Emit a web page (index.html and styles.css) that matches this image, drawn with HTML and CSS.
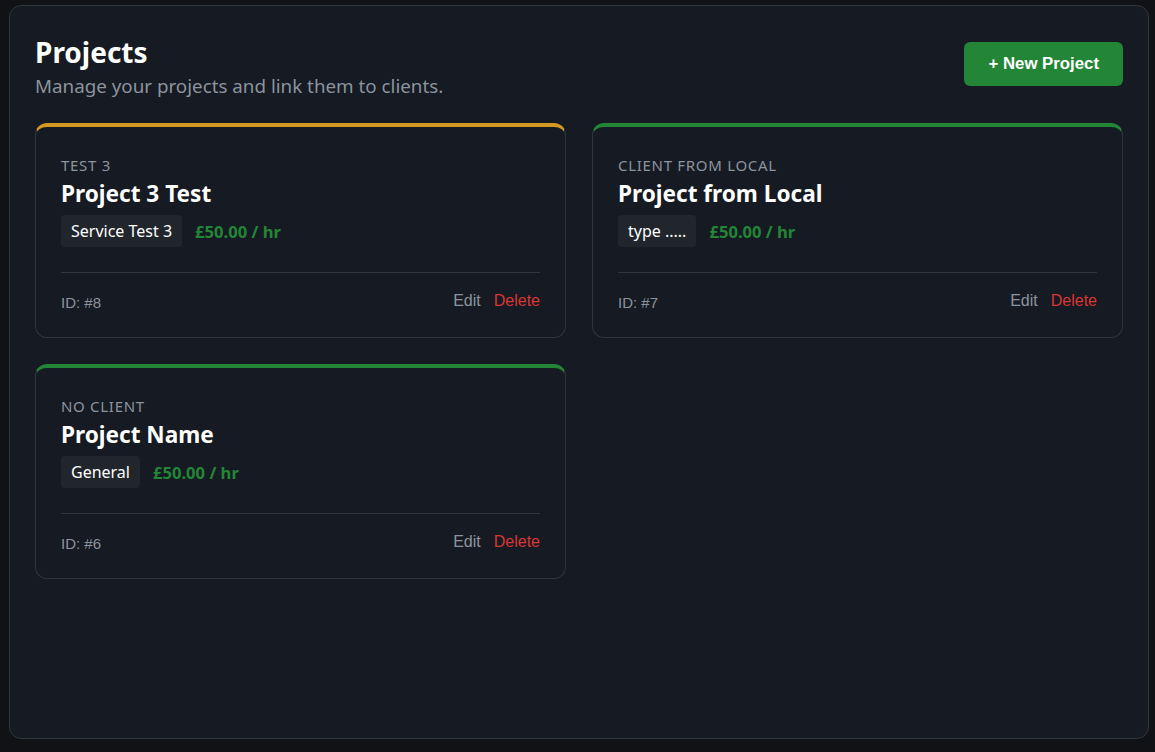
FILE: index.html
```html
<!DOCTYPE html>
<html lang="en">
<head>
    <meta charset="UTF-8">
    <meta name="viewport" content="width=device-width, initial-scale=1.0">
    <title>Projects</title>
    <link rel="stylesheet" href="styles.css">
</head>
<body>
    <div class="panel">
        <div class="header">
            <div>
                <h1 class="title">Projects</h1>
                <p class="subtitle">Manage your projects and link them to clients.</p>
            </div>
            <button class="btn-new">+ New Project</button>
        </div>

        <div class="grid">
            <div class="card card-amber">
                <div class="client">Test 3</div>
                <div class="name">Project 3 Test</div>
                <div class="meta">
                    <span class="tag">Service Test 3</span>
                    <span class="rate">£50.00 / hr</span>
                </div>
                <div class="footer">
                    <span class="id">ID: #8</span>
                    <div class="actions">
                        <button class="edit">Edit</button>
                        <button class="delete">Delete</button>
                    </div>
                </div>
            </div>

            <div class="card card-green">
                <div class="client">Client from Local</div>
                <div class="name">Project from Local</div>
                <div class="meta">
                    <span class="tag">type .....</span>
                    <span class="rate">£50.00 / hr</span>
                </div>
                <div class="footer">
                    <span class="id">ID: #7</span>
                    <div class="actions">
                        <button class="edit">Edit</button>
                        <button class="delete">Delete</button>
                    </div>
                </div>
            </div>

            <div class="card card-green">
                <div class="client">No client</div>
                <div class="name">Project Name</div>
                <div class="meta">
                    <span class="tag">General</span>
                    <span class="rate">£50.00 / hr</span>
                </div>
                <div class="footer">
                    <span class="id">ID: #6</span>
                    <div class="actions">
                        <button class="edit">Edit</button>
                        <button class="delete">Delete</button>
                    </div>
                </div>
            </div>
        </div>
    </div>
</body>
</html>
```

FILE: styles.css
```css
body {
    margin: 0;
    padding: 5px 6px 0 9px;
    background-color: #111215;
    font-family: "Noto Sans", "Open Sans", sans-serif;
    color: #e6edf3;
}

.panel {
    box-sizing: border-box;
    height: 734px;
    padding: 27px 25px 25px 25px;
    background-color: #161a22;
    border: 1px solid #30363d;
    border-radius: 12px;
}

.header {
    display: flex;
    justify-content: space-between;
    align-items: flex-start;
    margin-bottom: 24px;
}

.title {
    margin: 0;
    font-size: 28px;
    line-height: 38px;
    font-weight: 700;
    color: #ffffff;
}

.subtitle {
    margin: 2px 0 0 0;
    font-size: 18.8px;
    line-height: 26px;
    color: #8b949e;
}

.btn-new {
    margin-top: 9px;
    height: 44px;
    padding: 0 24px;
    border: none;
    border-radius: 6px;
    background-color: #238636;
    color: #ffffff;
    font-family: "Liberation Sans", Arial, sans-serif;
    font-size: 16.8px;
    font-weight: 700;
    cursor: pointer;
}

.grid {
    display: grid;
    grid-template-columns: 1fr 1fr;
    gap: 26px;
}

.card {
    padding: 28px 25px 26px 25px;
    border: 1px solid #30363d;
    border-top-width: 4px;
    border-radius: 12px;
    background-color: #161a22;
}

.card-amber {
    border-top-color: #d29922;
}

.card-green {
    border-top-color: #238636;
}

.client {
    font-size: 15px;
    line-height: 20px;
    text-transform: uppercase;
    letter-spacing: 0.7px;
    color: #8b949e;
    margin-bottom: 4px;
}

.name {
    font-size: 22.6px;
    line-height: 30px;
    font-weight: 700;
    color: #ffffff;
}

.meta {
    display: flex;
    align-items: center;
    gap: 13px;
    margin-top: 6px;
}

.tag {
    padding: 0 10px;
    height: 32px;
    line-height: 32px;
    border-radius: 4px;
    background-color: #21262d;
    font-size: 16px;
    color: #ffffff;
}

.rate {
    font-size: 16.6px;
    font-weight: 700;
    color: #238636;
}

.footer {
    display: flex;
    justify-content: space-between;
    align-items: center;
    margin-top: 25px;
    padding-top: 18px;
    border-top: 1px solid #30363d;
    font-family: "Liberation Sans", Arial, sans-serif;
}

.id {
    font-size: 15px;
    color: #8b949e;
    padding-top: 3px;
}

.actions {
    display: flex;
    gap: 13px;
}

.actions button {
    padding: 0;
    border: none;
    background: none;
    font-family: "Liberation Sans", Arial, sans-serif;
    font-size: 16px;
    line-height: 20px;
    cursor: pointer;
}

.edit {
    color: #8b949e;
}

.delete {
    color: #da3633;
}
```
